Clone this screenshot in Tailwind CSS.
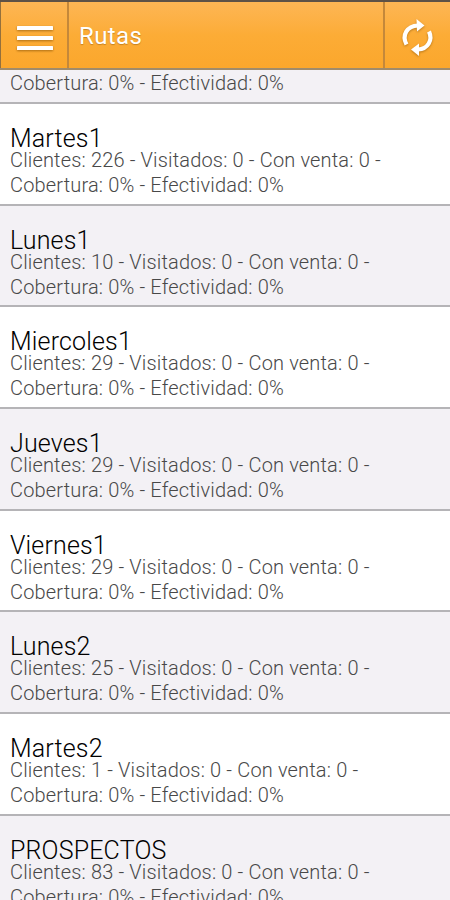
<!DOCTYPE html>
<html lang="es">
  <head>
    <meta charset="UTF-8" />
    <meta name="viewport" content="width=device-width, initial-scale=1.0" />
    <title>Rutas</title>
    <script src="https://cdn.jsdelivr.net/npm/@tailwindcss/browser@4"></script>
  </head>
  <body class="h-screen overflow-hidden bg-white font-['Roboto',sans-serif]">
    <header
      class="flex h-[70px] border-t-2 border-b-2 border-t-[#5e5246] border-b-[#a08b6b] bg-linear-to-b from-[#fdb654] via-[#fcac36] to-[#fba72c] text-white"
    >
      <button class="flex w-[69px] items-center justify-center border-r-2 border-l border-r-[#c4883a] border-l-[#94703c] pt-[5px] pl-[2px]">
        <svg class="h-[30px] w-10 drop-shadow-[0_1px_1px_rgba(120,70,0,0.6)]" viewBox="0 0 40 30" fill="#fff">
          <rect x="2" y="3" width="36" height="4" rx="0.5" />
          <rect x="2" y="13" width="36" height="4" rx="0.5" />
          <rect x="2" y="23" width="36" height="4" rx="0.5" />
        </svg>
      </button>
      <h1 class="flex-1 pt-[18px] pl-[10px] text-[24px] leading-8 tracking-[0.4px] [text-shadow:0_1px_1px_rgba(120,70,0,0.4)]">Rutas</h1>
      <button class="flex w-[67px] items-center justify-center border-l-2 border-[#c4883a] pt-1">
        <svg
          class="h-10 w-10 drop-shadow-[0_1px_1px_rgba(120,70,0,0.5)]"
          viewBox="0 0 40 40"
          fill="none"
          stroke="#fff"
          stroke-width="4.2"
        >
          <path d="M8.500 27.500C3.500 18 9 9 20 8.500" />
          <path d="M18.500 2L26.500 8.500L19 14.500Z" fill="#fff" stroke="none" />
          <path d="M31 14.500C35 23 30 32 20 32.500" />
          <path d="M21 26.500L13 32.500L21 39Z" fill="#fff" stroke="none" />
        </svg>
      </button>
    </header>

    <main class="text-[20px] leading-[25px] font-light tracking-[0.16px] text-[#484848]">
      <div class="h-[34px] border-b-2 border-[#b5b4b7] bg-[#f3f1f5] pl-[10px]">
        <p class="pt-px">Cobertura: 0% - Efectividad: 0%</p>
      </div>
      <div class="h-[101.7px] border-b-2 border-[#b5b4b7] bg-white pt-[25px] pl-[10px]">
        <h2 class="text-[25px] leading-[19px] text-black">Martes1</h2>
        <p>Clientes: 226 - Visitados: 0 - Con venta: 0 -<br />Cobertura: 0% - Efectividad: 0%</p>
      </div>
      <div class="h-[101.7px] border-b-2 border-[#b5b4b7] bg-[#f3f1f5] pt-[25px] pl-[10px]">
        <h2 class="text-[25px] leading-[19px] text-black">Lunes1</h2>
        <p>Clientes: 10 - Visitados: 0 - Con venta: 0 -<br />Cobertura: 0% - Efectividad: 0%</p>
      </div>
      <div class="h-[101.7px] border-b-2 border-[#b5b4b7] bg-white pt-[25px] pl-[10px]">
        <h2 class="text-[25px] leading-[19px] text-black">Miercoles1</h2>
        <p>Clientes: 29 - Visitados: 0 - Con venta: 0 -<br />Cobertura: 0% - Efectividad: 0%</p>
      </div>
      <div class="h-[101.7px] border-b-2 border-[#b5b4b7] bg-[#f3f1f5] pt-[25px] pl-[10px]">
        <h2 class="text-[25px] leading-[19px] text-black">Jueves1</h2>
        <p>Clientes: 29 - Visitados: 0 - Con venta: 0 -<br />Cobertura: 0% - Efectividad: 0%</p>
      </div>
      <div class="h-[101.7px] border-b-2 border-[#b5b4b7] bg-white pt-[25px] pl-[10px]">
        <h2 class="text-[25px] leading-[19px] text-black">Viernes1</h2>
        <p>Clientes: 29 - Visitados: 0 - Con venta: 0 -<br />Cobertura: 0% - Efectividad: 0%</p>
      </div>
      <div class="h-[101.7px] border-b-2 border-[#b5b4b7] bg-[#f3f1f5] pt-[25px] pl-[10px]">
        <h2 class="text-[25px] leading-[19px] text-black">Lunes2</h2>
        <p>Clientes: 25 - Visitados: 0 - Con venta: 0 -<br />Cobertura: 0% - Efectividad: 0%</p>
      </div>
      <div class="h-[101.7px] border-b-2 border-[#b5b4b7] bg-white pt-[25px] pl-[10px]">
        <h2 class="text-[25px] leading-[19px] text-black">Martes2</h2>
        <p>Clientes: 1 - Visitados: 0 - Con venta: 0 -<br />Cobertura: 0% - Efectividad: 0%</p>
      </div>
      <div class="h-[101.7px] border-b-2 border-[#b5b4b7] bg-[#f3f1f5] pt-[25px] pl-[10px]">
        <h2 class="text-[25px] leading-[19px] text-black">PROSPECTOS</h2>
        <p>Clientes: 83 - Visitados: 0 - Con venta: 0 -<br />Cobertura: 0% - Efectividad: 0%</p>
      </div>
    </main>
  </body>
</html>
